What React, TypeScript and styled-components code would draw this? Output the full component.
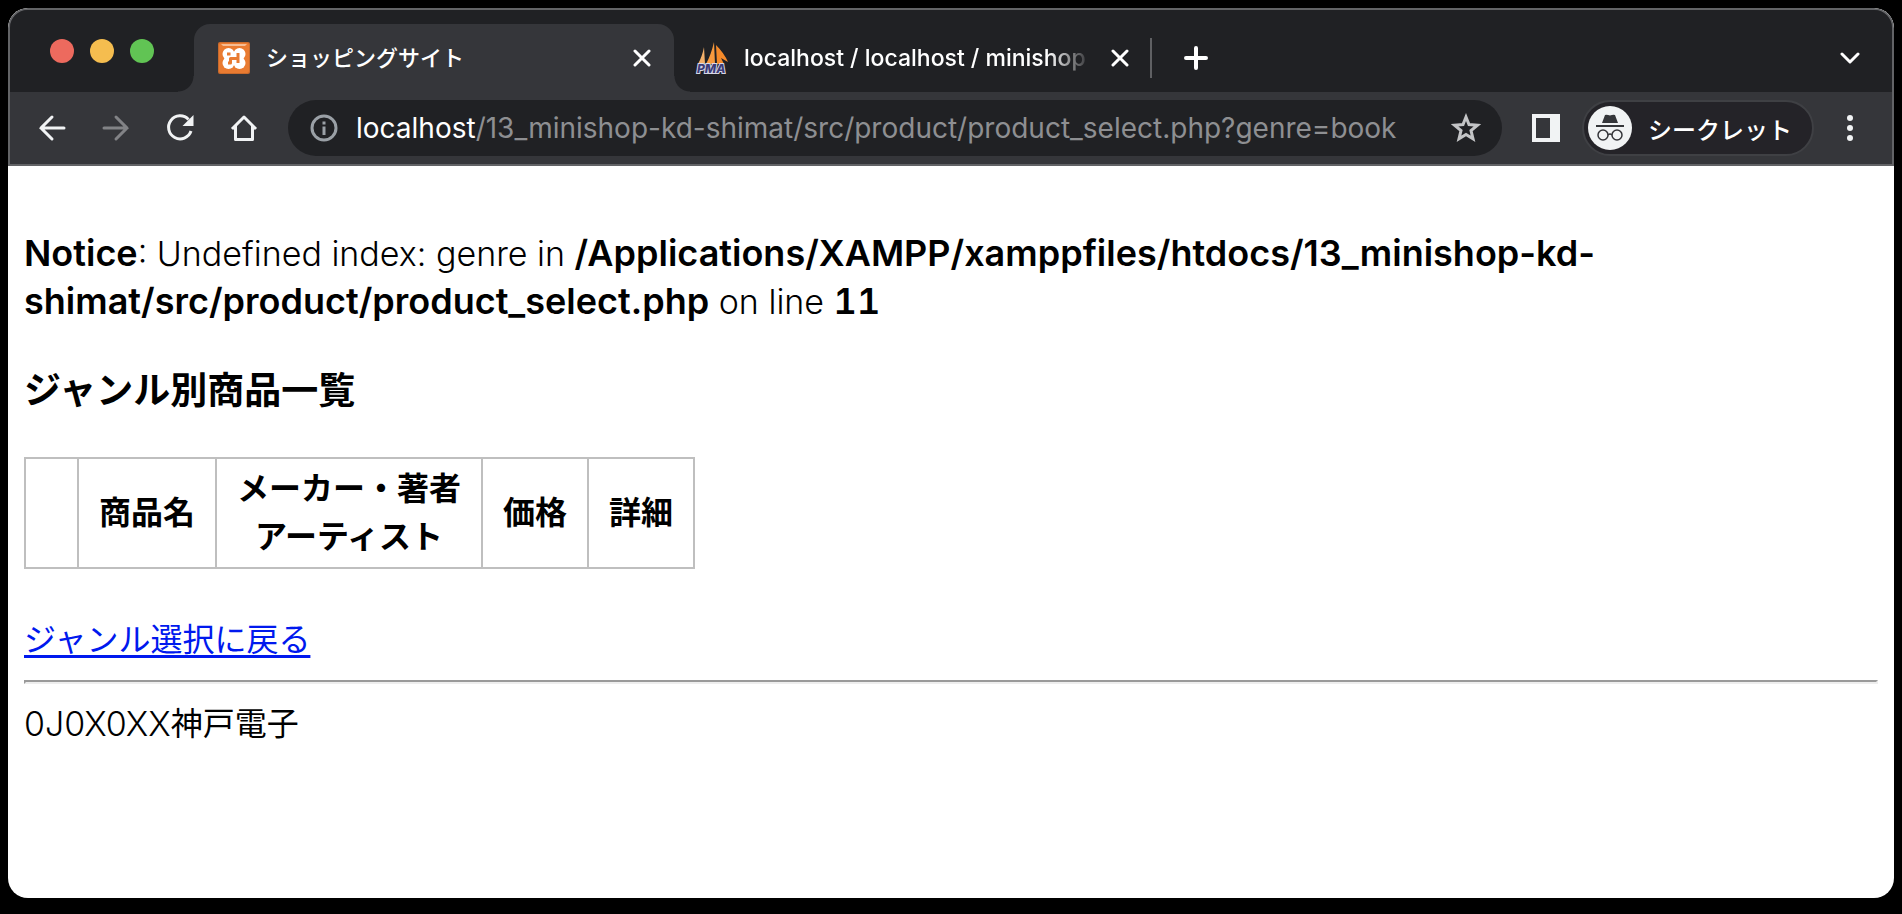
import React from "react";
import styled, { createGlobalStyle, css } from "styled-components";

const uiFont = `Inter, "Noto Sans CJK JP", sans-serif`;

const GlobalStyle = createGlobalStyle`
  *, *::before, *::after { box-sizing: border-box; }
  html { background: #000; }
  body { margin: 0; background: #000; }
`;

const Desktop = styled.div`
  display: flex;
  min-height: 100vh;
  padding: 8px 8px 16px;
  background: #000;
`;

const BrowserWindow = styled.div`
  flex: 1;
  min-width: 0;
  display: flex;
  flex-direction: column;
  overflow: hidden;
  border-radius: 20px;
  background: #fff;
`;

const Chrome = styled.header`
  border: 2px solid #626366;
  border-radius: 20px 20px 0 0;
  background: #35363a;
  color: #fff;
  font-family: ${uiFont};
  overflow: hidden;
`;

const TabStrip = styled.div`
  display: flex;
  height: 82px;
  background: #202124;
`;

const Controls = styled.div`
  display: flex;
  align-items: center;
  gap: 16px;
  width: 184px;
  padding-left: 40px;
`;

const Light = styled.button<{ $color: string }>`
  width: 24px;
  height: 24px;
  padding: 0;
  border: 0;
  border-radius: 50%;
  background: ${(p) => p.$color};
`;

const Tab = styled.div<{ $active?: boolean }>`
  position: relative;
  display: flex;
  align-items: center;
  gap: 16px;
  flex: 0 1 auto;
  width: ${(p) => (p.$active ? 480 : 476)}px;
  margin-top: 14px;
  padding: 0 ${(p) => (p.$active ? 20 : 18)}px 0 ${(p) => (p.$active ? 24 : 22)}px;
  border-radius: 16px 16px 0 0;
  ${(p) =>
    p.$active &&
    css`
      background: #35363a;
      &::before,
      &::after {
        content: "";
        position: absolute;
        bottom: 0;
        width: 16px;
        height: 16px;
      }
      &::before {
        right: 100%;
        background: radial-gradient(circle at 0 0, #202124 15px, #35363a 16px);
      }
      &::after {
        left: 100%;
        background: radial-gradient(circle at 100% 0, #202124 15px, #35363a 16px);
      }
    `}
`;

const TabTitle = styled.span<{ $fade?: boolean; $size: number }>`
  flex: 1;
  min-width: 0;
  overflow: hidden;
  white-space: nowrap;
  font-size: ${(p) => p.$size}px;
  line-height: 36px;
  font-weight: 500;
  ${(p) =>
    p.$fade &&
    css`
      mask-image: linear-gradient(to left, transparent, #000 44px);
    `}
`;

const IconButton = styled.button<{ $w?: number }>`
  display: flex;
  align-items: center;
  justify-content: center;
  flex: none;
  width: ${(p) => p.$w ?? 32}px;
  height: 32px;
  padding: 0;
  border: 0;
  background: none;
  color: #f1f3f4;
  &:disabled { color: #828386; }
`;

const Separator = styled.div`
  align-self: center;
  width: 2px;
  height: 40px;
  margin-top: 14px;
  background: #5f6063;
`;

const StripEnd = styled.div<{ $right?: boolean }>`
  display: flex;
  align-items: center;
  padding-top: 14px;
  ${(p) =>
    p.$right
      ? css`margin-left: auto; padding-right: 26px;`
      : css`padding-left: 28px;`}
`;

const Toolbar = styled.div`
  display: flex;
  align-items: center;
  height: 72px;
  padding: 0 26px;
`;

const NavGroup = styled.nav`
  display: flex;
  gap: 32px;
  margin-right: 28px;
`;

const AddressBar = styled.div`
  flex: 1;
  min-width: 0;
  display: flex;
  align-items: center;
  gap: 16px;
  height: 56px;
  margin-right: 30px;
  padding: 0 20px;
  border-radius: 28px;
  background: #202124;
`;

const AddressText = styled.div`
  flex: 1;
  min-width: 0;
  overflow: hidden;
  white-space: nowrap;
  font-size: 28px;
  line-height: 36px;
  color: #8e8f92;
`;

const Host = styled.span`
  color: #fff;
`;

const Incognito = styled.button`
  display: flex;
  align-items: center;
  gap: 16px;
  height: 56px;
  width: 232px;
  margin: 0 20px 0 22px;
  padding: 0 0 0 4px;
  border: 2px solid #3f4044;
  border-radius: 28px;
  background: #242328;
  color: #fff;
  font-family: ${uiFont};
  font-size: 24px;
  font-weight: 500;
  white-space: nowrap;
`;

const Page = styled.main`
  padding: 64px 16px 16px;
  color: #000;
  font-family: Inter, "Noto Sans CJK JP", sans-serif;
  font-size: 32px;
  line-height: 48px;
`;

const Notice = styled.p`
  margin: 0;
  font-size: 34px;
  font-weight: 300;
`;

const Strong = styled.b<{ $numeric?: boolean }>`
  font-size: 36px;
  font-weight: 600;
  line-height: 40px;
  ${(p) => p.$numeric && css`font-variant-numeric: tabular-nums;`}
`;

const Heading = styled.h3`
  margin: 37px 0 38px;
  font-size: 37px;
  line-height: 56px;
`;

const Products = styled.table`
  border-collapse: collapse;
  margin-bottom: 47px;
`;

const HeadCell = styled.th`
  padding: 6px 20px;
  border: 2px solid #bfbfbf;
  font-weight: 700;
  &:empty { padding: 6px 26px 6px 25px; }
`;

const BackLink = styled.a`
  color: #0019ee;
  text-decoration-thickness: 3px;
  text-underline-offset: 4px;
  text-decoration-skip-ink: none;
`;

const Rule = styled.hr`
  margin: 16px 0;
  border: 2px solid;
  border-color: #9a9a9a #eee #eee #9a9a9a;
`;

const Footer = styled.footer`
  display: flex;
`;

const StudentId = styled.span`
  font-size: 34px;
  font-weight: 300;
`;

const XamppIcon = () => (
  <svg width="32" height="32" viewBox="0 0 32 32" aria-hidden="true">
    <rect width="32" height="32" rx="2" fill="#c96a2c" />
    <rect x="1" y="1" width="30" height="30" rx="2" fill="#e97b31" />
    <path d="M3 2H29L27 4H5Z" fill="#f6bd94" />
    <g fill="#fff">
      <circle cx="10.500" cy="12" r="6" />
      <circle cx="21.500" cy="12" r="6" />
      <circle cx="10.500" cy="21" r="6" />
      <circle cx="21.500" cy="21" r="6" />
      <rect x="7" y="10" width="18" height="13" />
    </g>
    <path d="M9 12H12.500M20 11V16.500H12.500V21H10M20 16.500V21" fill="none" stroke="#e97b31" strokeWidth="3" strokeLinejoin="round" />
  </svg>
);

const PmaIcon = () => (
  <svg width="32" height="32" viewBox="0 0 32 32" overflow="visible" aria-hidden="true">
    <path d="M8 5L9 22H2Q6 15 8 5Z" fill="#f3b06a" />
    <path d="M18 0L19 22H10Q15 13 18 0Z" fill="#f79a3e" />
    <path d="M20 3Q28 11 32 20L25 16L28 22H21Z" fill="#f58a2a" />
    <text x="1" y="31" fontFamily="Inter, sans-serif" fontSize="12" fontWeight="800" fontStyle="italic" fill="#3c3c78" stroke="#d8d8e6" strokeWidth="2" paintOrder="stroke">PMA</text>
  </svg>
);

const CloseIcon = () => (
  <svg width="18" height="18" viewBox="0 0 18 18" fill="none" stroke="#fff" strokeWidth="3" strokeLinecap="round" aria-hidden="true">
    <path d="M2 2L16 16M16 2L2 16" />
  </svg>
);

export default function App() {
  return (
    <>
      <GlobalStyle />
      <Desktop>
        <BrowserWindow>
          <Chrome>
            <TabStrip>
              <Controls>
                <Light $color="#ed6a5e" aria-label="閉じる" />
                <Light $color="#f5bd4f" aria-label="最小化" />
                <Light $color="#61c454" aria-label="最大化" />
              </Controls>
              <Tab $active>
                <XamppIcon />
                <TabTitle $size={22}>ショッピングサイト</TabTitle>
                <IconButton $w={24} aria-label="タブを閉じる"><CloseIcon /></IconButton>
              </Tab>
              <Tab>
                <PmaIcon />
                <TabTitle $size={23} $fade>localhost / localhost / minishop</TabTitle>
                <IconButton $w={24} aria-label="タブを閉じる"><CloseIcon /></IconButton>
              </Tab>
              <Separator />
              <StripEnd>
                <IconButton aria-label="新しいタブ">
                  <svg width="26" height="26" viewBox="0 0 26 26" stroke="#fff" strokeWidth="4" strokeLinecap="round" aria-hidden="true">
                    <path d="M13 3V23M3 13H23" />
                  </svg>
                </IconButton>
              </StripEnd>
              <StripEnd $right>
                <IconButton aria-label="タブを検索">
                  <svg width="20" height="14" viewBox="0 0 20 14" fill="none" stroke="#fff" strokeWidth="3" strokeLinecap="round" strokeLinejoin="round" aria-hidden="true">
                    <path d="M2 3L10 11L18 3" />
                  </svg>
                </IconButton>
              </StripEnd>
            </TabStrip>
            <Toolbar>
              <NavGroup>
                <IconButton aria-label="戻る">
                  <svg width="28" height="28" viewBox="0 0 28 28" fill="none" stroke="currentColor" strokeWidth="3" strokeLinecap="round" aria-hidden="true">
                    <path d="M26 14H3M14 3L3 14L14 25" />
                  </svg>
                </IconButton>
                <IconButton disabled aria-label="進む">
                  <svg width="28" height="28" viewBox="0 0 28 28" fill="none" stroke="currentColor" strokeWidth="3" strokeLinecap="round" aria-hidden="true">
                    <path d="M2 14H25M14 3L25 14L14 25" />
                  </svg>
                </IconButton>
                <IconButton aria-label="再読み込み">
                  <svg width="28" height="28" viewBox="0 0 28 28" fill="none" aria-hidden="true">
                    <path d="M22.500 5.500A11.500 11.500 0 1 0 25 17" stroke="currentColor" strokeWidth="3" />
                    <path d="M27.500 1V12H16.500Z" fill="currentColor" />
                  </svg>
                </IconButton>
                <IconButton aria-label="ホーム">
                  <svg width="28" height="28" viewBox="0 0 28 28" fill="none" stroke="currentColor" strokeWidth="3" aria-hidden="true">
                    <path d="M2 15L14 3L26 15M5.500 12V25.500H22.500V12" strokeLinejoin="round" />
                  </svg>
                </IconButton>
              </NavGroup>
              <AddressBar>
                <IconButton aria-label="サイト情報を表示">
                  <svg width="28" height="28" viewBox="0 0 28 28" fill="none" stroke="#9aa0a6" strokeWidth="3" aria-hidden="true">
                    <circle cx="14" cy="14" r="12" />
                    <path d="M14 12.500V21M14 7.500V10.500" />
                  </svg>
                </IconButton>
                <AddressText><Host>localhost</Host>/13_minishop-kd-shimat/src/product/product_select.php?genre=book</AddressText>
                <IconButton aria-label="ブックマーク">
                  <svg width="30" height="30" viewBox="0 0 30 30" fill="none" stroke="#c3c4c6" strokeWidth="3" aria-hidden="true">
                    <path d="M15 4L18 11.500L26.500 12.200L20 17.600L22 25.800L15 21.400L8 25.800L10 17.600L3.500 12.200L12 11.500Z" />
                  </svg>
                </IconButton>
              </AddressBar>
              <IconButton $w={28} aria-label="サイドパネル">
                <svg width="28" height="28" viewBox="0 0 28 28" aria-hidden="true">
                  <path fillRule="evenodd" d="M0 0H28V28H0ZM4 4V24H18V4Z" fill="#f1f3f4" />
                </svg>
              </IconButton>
              <Incognito>
                <svg width="44" height="44" viewBox="0 0 44 44" aria-hidden="true">
                  <circle cx="22" cy="22" r="22" fill="#f1f3f4" />
                  <path d="M14 17L17 9Q19 8.500 22 9.500Q25 8.500 27 9L30 17Z" fill="#35363a" />
                  <path d="M8 20H36" stroke="#35363a" strokeWidth="2" />
                  <g fill="none" stroke="#35363a" strokeWidth="1.500">
                    <circle cx="15" cy="29" r="5" /><circle cx="29" cy="29" r="5" />
                    <path d="M20 29Q22 27 24 29" />
                  </g>
                </svg>
                シークレット
              </Incognito>
              <IconButton aria-label="メニュー">
                <svg width="8" height="28" viewBox="0 0 8 28" fill="#f1f3f4" aria-hidden="true">
                  <circle cx="4" cy="4" r="3" /><circle cx="4" cy="14" r="3" /><circle cx="4" cy="24" r="3" />
                </svg>
              </IconButton>
            </Toolbar>
          </Chrome>
          <Page>
            <Notice>
              <Strong>Notice</Strong>: Undefined index: genre in <Strong>/Applications/XAMPP/xamppfiles/htdocs/13_minishop-kd-shimat/src/product/product_select.php</Strong> on line <Strong $numeric>11</Strong>
            </Notice>
            <Heading>ジャンル別商品一覧</Heading>
            <Products>
              <thead>
                <tr>
                  <HeadCell />
                  <HeadCell>商品名</HeadCell>
                  <HeadCell>メーカー・著者<br />アーティスト</HeadCell>
                  <HeadCell>価格</HeadCell>
                  <HeadCell>詳細</HeadCell>
                </tr>
              </thead>
            </Products>
            <BackLink href="#genre">ジャンル選択に戻る</BackLink>
            <Rule />
            <Footer><StudentId>0J0X0XX</StudentId>神戸電子</Footer>
          </Page>
        </BrowserWindow>
      </Desktop>
    </>
  );
}
